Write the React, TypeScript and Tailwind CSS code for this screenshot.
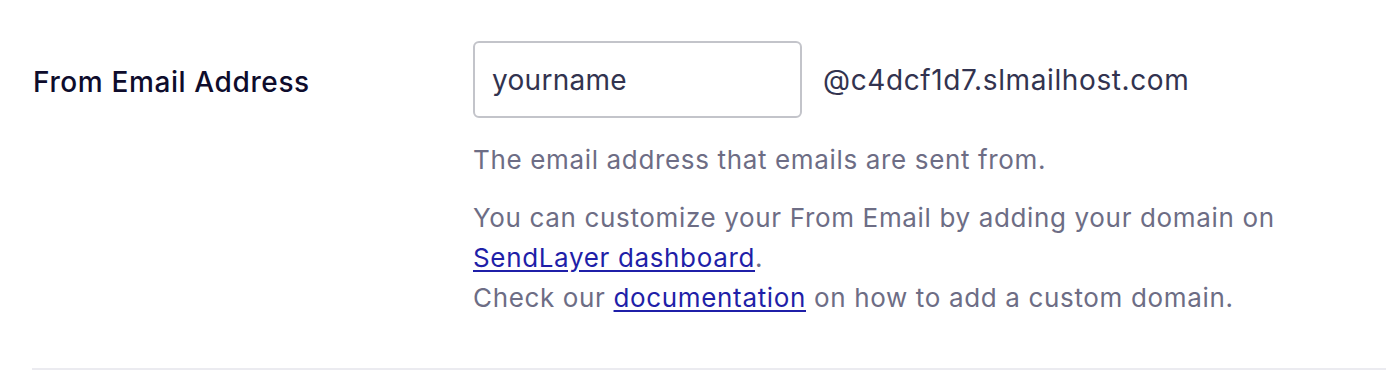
import React from "react";

export default function App() {
  return (
    <div className="w-[1400px] h-[378px] bg-white" style={{ fontFamily: "Inter, 'Noto Sans', sans-serif" }}>
      <div className="pt-[41px]">
        <div className="flex pl-[33px]">
          <div className="w-[440px] shrink-0 pt-[24px]">
            <span className="text-[28px] leading-[34px] font-medium tracking-[0.022em] text-[#0e0c2c]">From Email Address</span>
          </div>
          <div className="flex-1">
            <div className="flex items-center">
              <div className="w-[329px] h-[77px] rounded-[6px] border-2 border-[#c3c4ca] flex items-center px-[17px]">
                <span className="text-[28px] tracking-[0.01em] text-[#32334f]">yourname</span>
              </div>
              <span className="ml-[21px] text-[28px] tracking-[0.022em] text-[#32334f]">@c4dcf1d7.slmailhost.com</span>
            </div>
            <p className="mt-[22px] text-[26px] leading-[40px] tracking-[0.025em] text-[#6d6d85]">The email address that emails are sent from.</p>
            <p className="mt-[18px] text-[26px] leading-[40px] tracking-[0.025em] text-[#6d6d85]">
              You can customize your From Email by adding your domain on
              <br />
              <a href="#" className="text-[#1f1fa8] underline underline-offset-[3px]">SendLayer dashboard</a>.
              <br />
              Check our <a href="#" className="text-[#1f1fa8] underline underline-offset-[3px]">documentation</a> on how to add a custom domain.
            </p>
          </div>
        </div>
        <div className="mt-[50px] ml-[32px] h-[2px] bg-[#ebebf0] w-[1354px]" />
      </div>
    </div>
  );
}
